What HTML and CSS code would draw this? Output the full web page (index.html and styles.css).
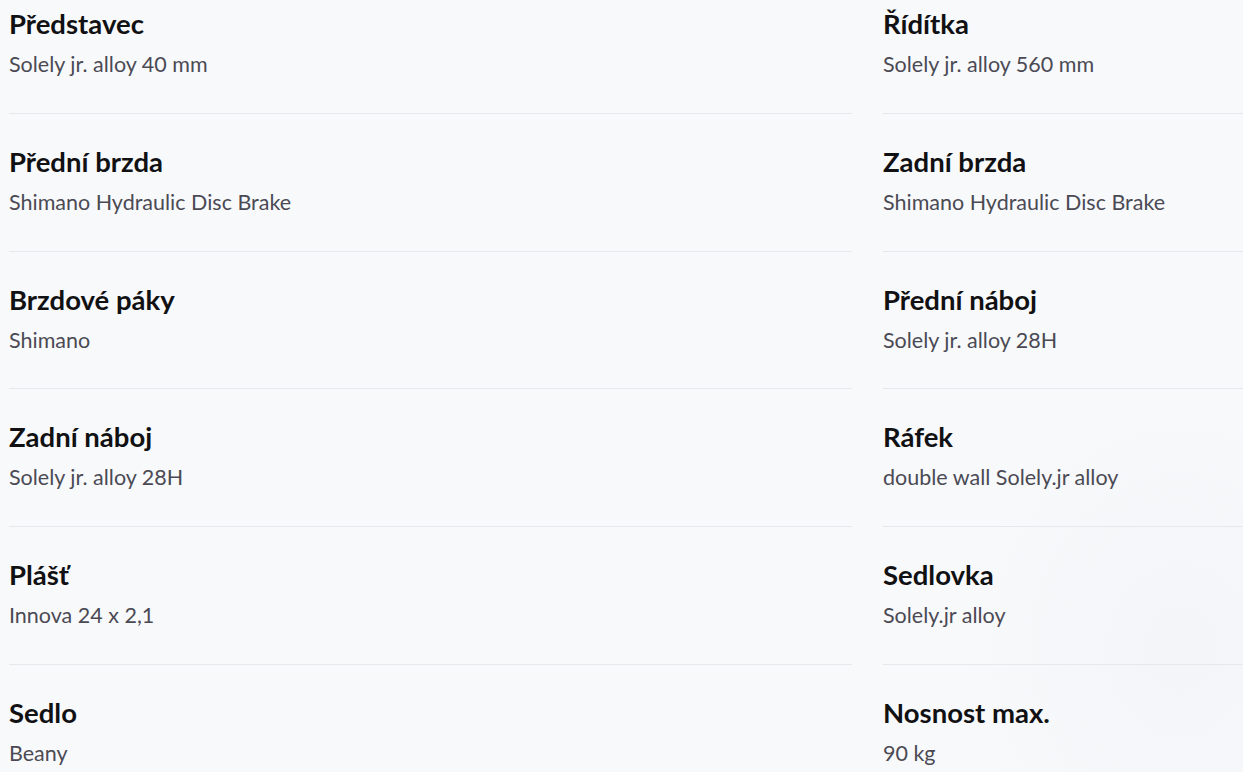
FILE: index.html
```html
<!DOCTYPE html>
<html lang="cs">
<head>
<meta charset="utf-8">
<title>Specifikace</title>
<link rel="stylesheet" href="styles.css">
</head>
<body>
<div class="page">
  <dl class="specs">
    <div class="spec"><dt class="name">Představec</dt><dd class="value">Solely jr. alloy 40 mm</dd></div>
    <div class="spec"><dt class="name">Řídítka</dt><dd class="value">Solely jr. alloy 560 mm</dd></div>
    <div class="spec"><dt class="name">Přední brzda</dt><dd class="value">Shimano Hydraulic Disc Brake</dd></div>
    <div class="spec"><dt class="name">Zadní brzda</dt><dd class="value">Shimano Hydraulic Disc Brake</dd></div>
    <div class="spec"><dt class="name">Brzdové páky</dt><dd class="value">Shimano</dd></div>
    <div class="spec"><dt class="name">Přední náboj</dt><dd class="value">Solely jr. alloy 28H</dd></div>
    <div class="spec"><dt class="name">Zadní náboj</dt><dd class="value">Solely jr. alloy 28H</dd></div>
    <div class="spec"><dt class="name">Ráfek</dt><dd class="value">double wall Solely.jr alloy</dd></div>
    <div class="spec"><dt class="name">Plášť</dt><dd class="value">Innova 24 x 2,1</dd></div>
    <div class="spec"><dt class="name">Sedlovka</dt><dd class="value">Solely.jr alloy</dd></div>
    <div class="spec"><dt class="name">Sedlo</dt><dd class="value">Beany</dd></div>
    <div class="spec"><dt class="name">Nosnost max.</dt><dd class="value">90 kg</dd></div>
  </dl>
</div>
</body>
</html>
```

FILE: styles.css
```css
html, body {
  margin: 0;
  padding: 0;
  background: #f8f9fb;
  overflow: hidden;
}

.page {
  width: 1243px;
  height: 772px;
  overflow: hidden;
  font-family: "Lato", "Noto Sans", sans-serif;
  background:
    radial-gradient(ellipse 220px 260px at 1180px 650px, rgba(120, 124, 135, 0.035), rgba(120, 124, 135, 0) 100%),
    #f8f9fb;
}

.specs {
  display: grid;
  grid-template-columns: 843px 843px;
  column-gap: 31px;
  margin: -24px 0 0 9px;
  padding: 0;
}

.spec {
  padding: 31px 0 34.8px;
  border-bottom: 1px solid #e6e8ec;
}

.name {
  margin: 0;
  font-size: 27.5px;
  line-height: 34px;
  font-weight: 700;
  color: #111113;
}

.value {
  margin: 9px 0 0;
  font-size: 21.5px;
  line-height: 28px;
  color: #4b4a54;
}
```
